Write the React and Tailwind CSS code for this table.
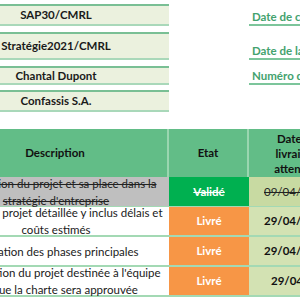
export default function App() {
  const leftCell =
    "w-[226px] shrink-0 bg-[#ebf1de] border-t-2 border-b-2 border-t-[#79bf94] border-b-[#a9d8b9] flex items-center justify-center font-bold text-[11.5px] text-[#1a1a1a]";
  const label =
    "ml-[80px] w-[120px] border-b-2 border-[#7cc59b] text-[11.5px] font-bold text-[#44a26e] whitespace-nowrap pl-[3px] leading-[14px] pb-0";
  const descCell =
    "bg-white text-[11.5px] leading-[17px] text-[#1a1a1a] flex flex-col items-center justify-center whitespace-nowrap border-b-2 border-[#a3d9b4]";
  return (
    <div className="w-[300px] h-[300px] overflow-hidden bg-white font-['Lato',sans-serif]">
      <div className="-ml-[57px] w-[440px]">
        {/* Top info */}
        <div className="pt-[4px] flex flex-col">
          <div className="flex h-[22px]">
            <div className={leftCell}>SAP30/CMRL</div>
            <div className="self-end">
              <div className={label}>Date de création</div>
            </div>
          </div>
          <div className="flex h-[28px] mt-[6px]">
            <div className={leftCell}>Stratégie2021/CMRL</div>
            <div className="self-end">
              <div className={label}>Date de la mise à jour</div>
            </div>
          </div>
          <div className="flex h-[19px] mt-[6px]">
            <div className={leftCell}>Chantal Dupont</div>
            <div className="self-end">
              <div className={label}>Numéro de version</div>
            </div>
          </div>
          <div className="flex h-[22px] mt-[5px]">
            <div className={leftCell}>Confassis S.A.</div>
          </div>
        </div>

        {/* Table */}
        <div className="mt-[17px] grid grid-cols-[226px_80px_96px]">
          <div className="h-[48px] bg-[#62bd87] flex items-center justify-center font-bold text-[11.5px] text-[#111] border-r-2 border-[#9ad6b0]">
            Description
          </div>
          <div className="h-[48px] bg-[#62bd87] flex items-center justify-center font-bold text-[11.5px] text-[#111] border-r-2 border-[#9ad6b0]">
            Etat
          </div>
          <div className="h-[48px] bg-[#62bd87] flex flex-col items-center justify-center font-bold text-[11.5px] leading-[15px] text-[#111]">
            <span>Date de</span>
            <span>livraison</span>
            <span>attendue</span>
          </div>

          {/* Row 1 */}
          <div className="h-[30px] bg-[#bfbfbf] text-[11.5px] leading-[17px] text-[#222] flex flex-col items-center justify-center whitespace-nowrap line-through border-b border-[#a3d9b4]">
            <span>Description du projet et sa place dans la</span>
            <span>stratégie d'entreprise</span>
          </div>
          <div className="h-[30px] bg-[#00b050] text-white font-bold text-[11.5px] flex items-center justify-center line-through border-b border-[#a3d9b4]">
            Validé
          </div>
          <div className="h-[30px] bg-[#c8daa2] text-[11.5px] text-[#222] flex items-center justify-start pl-[15px] line-through border-b border-[#a3d9b4]">
            09/04/2021
          </div>

          {/* Row 2 */}
          <div className={`h-[30px] ${descCell}`}>
            <span>Charte du projet détaillée y inclus délais et</span>
            <span>coûts estimés</span>
          </div>
          <div className="h-[30px] bg-[#f79646] text-white font-bold text-[11.5px] flex items-center justify-center border-b-2 border-[#a3d9b4]">
            Livré
          </div>
          <div className="h-[30px] bg-[#d3e2b3] text-[11.5px] font-bold text-[#111] flex items-center pl-[15px] border-b-2 border-[#a3d9b4]">
            29/04/2021
          </div>

          {/* Row 3 */}
          <div className={`h-[30px] ${descCell}`}>
            <span>Validation des phases principales</span>
          </div>
          <div className="h-[30px] bg-[#f79646] text-white font-bold text-[11.5px] flex items-center justify-center border-b-2 border-[#a3d9b4]">
            Livré
          </div>
          <div className="h-[30px] bg-[#d3e2b3] text-[11.5px] font-bold text-[#111] flex items-center pl-[15px] border-b-2 border-[#a3d9b4]">
            29/04/2021
          </div>

          {/* Row 4 */}
          <div className={`h-[30px] ${descCell}`}>
            <span>Présentation du projet destinée à l'équipe</span>
            <span>lorsque la charte sera approuvée</span>
          </div>
          <div className="h-[30px] bg-[#f79646] text-white font-bold text-[11.5px] flex items-center justify-center border-b-2 border-[#a3d9b4]">
            Livré
          </div>
          <div className="h-[30px] bg-[#d3e2b3] text-[11.5px] font-bold text-[#111] flex items-center pl-[22px] border-b-2 border-[#a3d9b4]">
            29/04/2021
          </div>
        </div>
      </div>
    </div>
  );
}
